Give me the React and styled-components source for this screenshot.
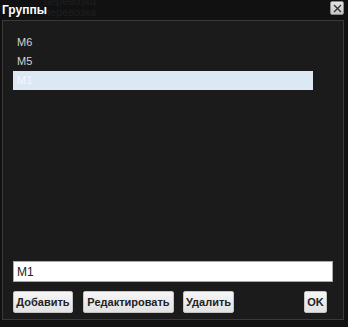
import React, { useState } from 'react'
import styled, { createGlobalStyle } from 'styled-components'

const Global = createGlobalStyle`
  html, body {
    margin: 0;
    padding: 0;
    background: #111111;
  }
  body {
    font-family: "Liberation Sans", Arial, sans-serif;
  }
`

const Window = styled.div`
  position: relative;
  width: 348px;
  height: 327px;
  background: #111111;
  display: flex;
  flex-direction: column;
  overflow: hidden;
`

// faint text from the page behind the dialog
const Ghost = styled.div`
  position: absolute;
  left: 44px;
  top: -4px;
  font-size: 11px;
  line-height: 11px;
  color: #1f1f1f;
  pointer-events: none;
`

const TitleBar = styled.div`
  position: relative;
  height: 20px;
  display: flex;
  align-items: center;
  justify-content: space-between;
  padding: 0 4px 0 2px;
  box-sizing: border-box;
`

const Title = styled.span`
  color: #ffffff;
  font-size: 12px;
  font-weight: bold;
`

const CloseBtn = styled.button`
  width: 14px;
  height: 14px;
  margin-top: -4px;
  padding: 0;
  border: 1px solid #8a8a8a;
  border-radius: 2px;
  background: linear-gradient(#e4e4e4, #c6c6c6);
  display: flex;
  align-items: center;
  justify-content: center;
  cursor: pointer;
`

const Panel = styled.div`
  height: 300px;
  margin: 0 4px 0 2px;
  border: 1px solid #3a3a3a;
  background: #1b1b1b;
  box-sizing: border-box;
  padding: 12px 10px 6px 10px;
  display: flex;
  flex-direction: column;
`

const List = styled.div`
  flex: 1;
  width: 300px;
  display: flex;
  flex-direction: column;
`

const Item = styled.div`
  height: 19px;
  line-height: 19px;
  padding-left: 4px;
  font-size: 11px;
  color: ${p => (p.selected ? '#f4f7fb' : '#d4d4d4')};
  background: ${p => (p.selected ? '#dde8f5' : 'transparent')};
  cursor: default;
`

const Input = styled.input`
  height: 21px;
  width: 100%;
  box-sizing: border-box;
  border: 1px solid #a9a9a9;
  background: #ffffff;
  padding: 0 3px;
  font-family: "Liberation Sans", Arial, sans-serif;
  font-size: 12px;
  color: #222222;
  outline: none;
`

const Buttons = styled.div`
  margin-top: 9px;
  height: 22px;
  display: flex;
`

const Button = styled.button`
  width: ${p => p.w}px;
  height: 22px;
  padding: 0;
  margin-left: ${p => (p.push ? 'auto' : `${p.ml || 0}px`)};
  margin-right: ${p => p.mr || 0}px;
  border: 1px solid #c4c4c4;
  border-radius: 2px;
  background: linear-gradient(#f6f6f6, #e2e2e2);
  color: #222222;
  font-family: "Liberation Sans", Arial, sans-serif;
  font-size: 11px;
  font-weight: bold;
  white-space: nowrap;
  cursor: pointer;
`

export default function App() {
  const [groups] = useState(['M6', 'M5', 'M1'])
  const [selected, setSelected] = useState(2)
  const [name, setName] = useState('M1')

  return (
    <>
      <Global />
      <Window>
        <Ghost>перевозка<br />перевозка</Ghost>
        <TitleBar>
          <Title>Группы</Title>
          <CloseBtn aria-label="close">
            <svg width="9" height="9" viewBox="0 0 9 9">
              <path d="M1 1L8 8M8 1L1 8" stroke="#333" strokeWidth="1.4" />
            </svg>
          </CloseBtn>
        </TitleBar>
        <Panel>
          <List>
            {groups.map((g, i) => (
              <Item key={g} selected={i === selected} onClick={() => { setSelected(i); setName(g) }}>
                {g}
              </Item>
            ))}
          </List>
          <Input value={name} onChange={e => setName(e.target.value)} />
          <Buttons>
            <Button w={60}>Добавить</Button>
            <Button w={91} ml={10}>Редактировать</Button>
            <Button w={51} ml={9}>Удалить</Button>
            <Button w={23} push mr={6}>OK</Button>
          </Buttons>
        </Panel>
      </Window>
    </>
  )
}
